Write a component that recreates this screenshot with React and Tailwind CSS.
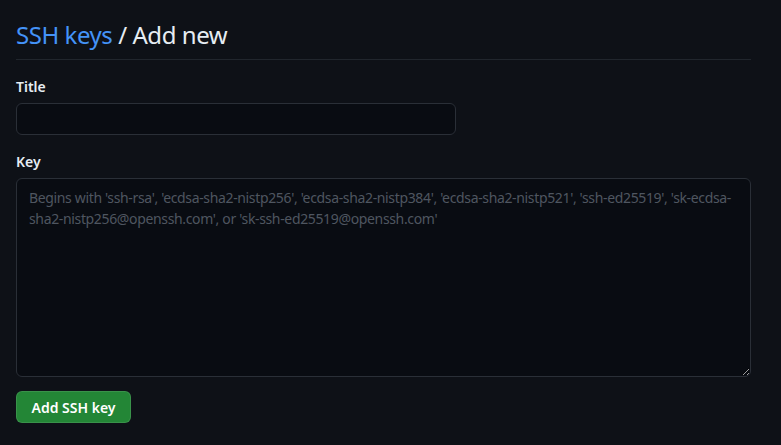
export default function App() {
  return (
    <div
      className="min-h-[445px] w-full bg-[#0e1117] text-[#e6edf3]"
      style={{ fontFamily: '"Noto Sans", "Open Sans", sans-serif' }}
    >
      <div className="w-[735px] ml-4 pt-[17px]">
        <div className="border-b border-[#21262d] pb-[6px]">
          <h2 className="text-[24px] leading-[36px] font-normal tracking-[-0.45px]">
            <a className="text-[#4493f8]">SSH keys</a> / Add new
          </h2>
        </div>

        <form onSubmit={(event) => event.preventDefault()} className="pt-[16px]">
          <div className="mb-[16px]">
            <label className="block text-[14px] font-semibold leading-[21px] mb-[6px]" htmlFor="ssh-title">
              Title
            </label>
            <input
              id="ssh-title"
              type="text"
              className="block w-[440px] h-[32px] rounded-md border border-[#2a2f37] bg-[#090c12] px-3 text-[14px] text-[#e6edf3] focus:outline-none"
            />
          </div>

          <div className="mb-[14px]">
            <label className="block text-[14px] font-semibold leading-[21px] mb-[6px]" htmlFor="ssh-key">
              Key
            </label>
            <textarea
              id="ssh-key"
              placeholder="Begins with 'ssh-rsa', 'ecdsa-sha2-nistp256', 'ecdsa-sha2-nistp384', 'ecdsa-sha2-nistp521', 'ssh-ed25519', 'sk-ecdsa-sha2-nistp256@openssh.com', or 'sk-ssh-ed25519@openssh.com'"
              className="block w-full h-[199px] rounded-md border border-[#2a2f37] bg-[#090c12] px-3 py-[8px] text-[14px] leading-[21px] tracking-[-0.35px] text-[#e6edf3] placeholder:text-[#4f5660] focus:outline-none"
            />
          </div>

          <button
            type="submit"
            className="h-[32px] w-[115px] rounded-md border border-[#ffffff1a] bg-[#238636] text-[14px] font-semibold text-white"
          >
            Add SSH key
          </button>
        </form>
      </div>
    </div>
  )
}
